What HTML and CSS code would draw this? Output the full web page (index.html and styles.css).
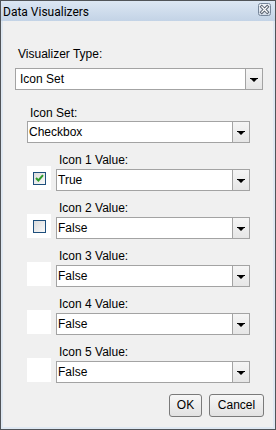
FILE: index.html
```html
<!DOCTYPE html>
<html>
<head>
<meta charset="utf-8">
<link rel="stylesheet" href="styles.css">
</head>
<body>
<div class="window">
  <div class="titlebar">
    <span class="title">Data Visualizers</span>
    <span class="close">
      <svg width="13" height="13" viewBox="0 0 13 13">
        <defs>
          <linearGradient id="cg" x1="0" y1="0" x2="0" y2="1">
            <stop offset="0" stop-color="#f2f5f9"/>
            <stop offset="1" stop-color="#d3dce8"/>
          </linearGradient>
        </defs>
        <rect x="0.5" y="0.5" width="12" height="12" rx="2" fill="url(#cg)" stroke="#76869a"/>
        <path d="M3.8 3.8 L9.2 9.2 M9.2 3.8 L3.8 9.2" stroke="#5a6472" stroke-width="3.2" stroke-linecap="square"/>
        <path d="M3.8 3.8 L9.2 9.2 M9.2 3.8 L3.8 9.2" stroke="#ffffff" stroke-width="1.3" stroke-linecap="square"/>
      </svg>
    </span>
  </div>
  <div class="frame">
    <div class="content">
      <div class="section type-section">
        <div class="label">Visualizer Type:</div>
        <div class="combo combo-type">
          <span class="value">Icon Set</span>
          <span class="drop"><svg width="8" height="4" viewBox="0 0 8 4"><polygon points="0,0 8,0 8,1 7,1 4,4 1,1 0,1" fill="#000"/></svg></span>
        </div>
      </div>
      <div class="section set-section">
        <div class="label">Icon Set:</div>
        <div class="combo combo-set">
          <span class="value">Checkbox</span>
          <span class="drop"><svg width="8" height="4" viewBox="0 0 8 4"><polygon points="0,0 8,0 8,1 7,1 4,4 1,1 0,1" fill="#000"/></svg></span>
        </div>
      </div>
      <div class="rows">
        <div class="row">
          <div class="label row-label">Icon 1 Value:</div>
          <div class="swatch">
            <span class="check checked">
              <svg width="9" height="8" viewBox="0 0 9 8"><path d="M1 4 L3.4 6.5 L8 1.2" fill="none" stroke="#2e9c2a" stroke-width="2"/></svg>
            </span>
          </div>
          <div class="combo">
            <span class="value">True</span>
            <span class="drop"><svg width="8" height="4" viewBox="0 0 8 4"><polygon points="0,0 8,0 8,1 7,1 4,4 1,1 0,1" fill="#000"/></svg></span>
          </div>
        </div>
        <div class="row">
          <div class="label row-label">Icon 2 Value:</div>
          <div class="swatch"><span class="check"></span></div>
          <div class="combo">
            <span class="value">False</span>
            <span class="drop"><svg width="8" height="4" viewBox="0 0 8 4"><polygon points="0,0 8,0 8,1 7,1 4,4 1,1 0,1" fill="#000"/></svg></span>
          </div>
        </div>
        <div class="row">
          <div class="label row-label">Icon 3 Value:</div>
          <div class="swatch"></div>
          <div class="combo">
            <span class="value">False</span>
            <span class="drop"><svg width="8" height="4" viewBox="0 0 8 4"><polygon points="0,0 8,0 8,1 7,1 4,4 1,1 0,1" fill="#000"/></svg></span>
          </div>
        </div>
        <div class="row">
          <div class="label row-label">Icon 4 Value:</div>
          <div class="swatch"></div>
          <div class="combo">
            <span class="value">False</span>
            <span class="drop"><svg width="8" height="4" viewBox="0 0 8 4"><polygon points="0,0 8,0 8,1 7,1 4,4 1,1 0,1" fill="#000"/></svg></span>
          </div>
        </div>
        <div class="row">
          <div class="label row-label">Icon 5 Value:</div>
          <div class="swatch"></div>
          <div class="combo">
            <span class="value">False</span>
            <span class="drop"><svg width="8" height="4" viewBox="0 0 8 4"><polygon points="0,0 8,0 8,1 7,1 4,4 1,1 0,1" fill="#000"/></svg></span>
          </div>
        </div>
      </div>
      <div class="buttons">
        <button class="btn btn-ok">OK</button>
        <button class="btn btn-cancel">Cancel</button>
      </div>
    </div>
  </div>
</div>
</body>
</html>
```

FILE: styles.css
```css
* { box-sizing: border-box; }
html, body { margin: 0; padding: 0; }
body {
  width: 276px;
  height: 430px;
  overflow: hidden;
  font-family: "Liberation Sans", Arial, sans-serif;
  font-size: 12px;
  color: #000;
  background: #ffffff;
}
.window {
  width: 276px;
  height: 430px;
  border: 1px solid #505458;
  display: flex;
  flex-direction: column;
  background: #dbe5f0;
}
.titlebar {
  height: 20px;
  flex: none;
  display: flex;
  align-items: center;
  justify-content: space-between;
  padding: 0 4px 0 2px;
  background: linear-gradient(#dce7f3, #c3d3e6);
}
.title {
  font-family: Roboto, "Liberation Sans", sans-serif;
  font-size: 12px;
  color: #000;
  line-height: 20px;
  padding-top: 1px;
}
.close {
  display: flex;
  margin-top: -3px;
}
.frame {
  flex: 1;
  display: flex;
  padding: 0 2px 2px 2px;
  background: #dfe8f2;
}
.content {
  flex: 1;
  background: #f0f0f0;
  display: flex;
  flex-direction: column;
}
.label {
  line-height: 14px;
  height: 14px;
  padding-left: 3px;
  white-space: nowrap;
}
.section {
  display: flex;
  flex-direction: column;
}
.type-section {
  margin-top: 26px;
  padding-left: 12px;
}
.type-section .label { margin-bottom: 7px; }
.set-section {
  margin-top: 16px;
  padding-left: 24px;
}
.set-section .label { margin-bottom: 1px; }
.combo {
  height: 22px;
  border: 1px solid #a3a3a3;
  background: #fff;
  display: flex;
  align-items: stretch;
}
.combo .value {
  flex: 1;
  line-height: 20px;
  padding-left: 1px;
  white-space: nowrap;
}
.combo-type { width: 248px; }
.combo-type .value { padding-left: 4px; }
.combo-set { width: 223px; }
.drop {
  width: 17px;
  flex: none;
  border-left: 1px solid #a3a3a3;
  background: linear-gradient(#f5f5f5, #e6e6e6);
  display: flex;
  align-items: center;
  justify-content: center;
  padding-top: 1px;
}
.drop svg { display: block; }
.rows {
  margin-top: 10px;
  padding-left: 24px;
  display: flex;
  flex-direction: column;
  gap: 10px;
}
.row {
  display: grid;
  grid-template-columns: 24px 194px;
  column-gap: 5px;
  row-gap: 2px;
}
.row-label { grid-column: 2; }
.swatch {
  grid-column: 1;
  width: 24px;
  height: 24px;
  margin-top: -3px;
  background: #fff;
  display: flex;
  align-items: center;
  justify-content: center;
}
.check {
  width: 13px;
  height: 13px;
  border: 1px solid #1e4f7c;
  background: linear-gradient(135deg, #dcdcdc, #f9f9f9);
  display: flex;
  align-items: center;
  justify-content: center;
}
.check svg { display: block; }
.buttons {
  margin-top: 11px;
  display: flex;
  justify-content: flex-end;
  gap: 7px;
  padding-right: 9px;
}
.btn {
  height: 23px;
  border: 1px solid #7a7a7a;
  border-radius: 3px;
  background: linear-gradient(#f7f7f7, #e2e2e2);
  font-family: "Liberation Sans", Arial, sans-serif;
  font-size: 12px;
  color: #000;
  padding: 0;
  line-height: 21px;
}
.btn-ok { width: 33px; }
.btn-cancel { width: 55px; }
```
